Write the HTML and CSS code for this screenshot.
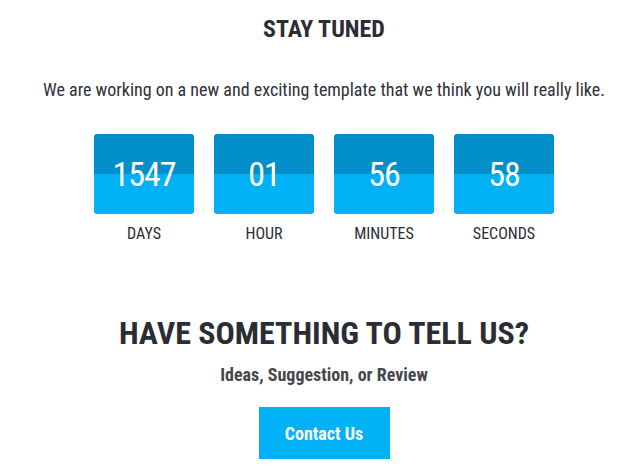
FILE: index.html
```html
<!DOCTYPE html>
<html>
<head>
<meta charset="utf-8">
<link rel="stylesheet" href="styles.css">
</head>
<body>
<main class="page">
  <h1 class="title">STAY TUNED</h1>
  <p class="lead">We are working on a new and exciting template that we think you will really like.</p>
  <div class="countdown">
    <div class="unit"><div class="box"><span class="num">1547</span></div><div class="label">DAYS</div></div>
    <div class="unit"><div class="box"><span class="num">01</span></div><div class="label">HOUR</div></div>
    <div class="unit"><div class="box"><span class="num">56</span></div><div class="label">MINUTES</div></div>
    <div class="unit"><div class="box"><span class="num">58</span></div><div class="label">SECONDS</div></div>
  </div>
  <h2 class="cta-title">HAVE SOMETHING TO TELL US?</h2>
  <p class="cta-sub">Ideas, Suggestion, or Review</p>
  <a class="btn" href="#">Contact Us</a>
</main>
</body>
</html>
```
FILE: styles.css
```css
html, body {
  margin: 0;
  padding: 0;
  background: #ffffff;
  overflow: hidden;
}
.page {
  font-family: "Roboto Condensed", "Liberation Sans Narrow", "DejaVu Sans Condensed", sans-serif;
  color: #2b2d34;
  display: flex;
  flex-direction: column;
  align-items: center;
  box-sizing: border-box;
  width: 631px;
  padding-left: 17px;
}
.title {
  margin: 13px 0 0;
  font-size: 24px;
  line-height: 32px;
  font-weight: 700;
}
.lead {
  margin: 34px 0 0;
  font-size: 18px;
  line-height: 22px;
  color: #2f3137;
}
.countdown {
  display: flex;
  gap: 20px;
  margin-top: 33px;
}
.unit {
  display: flex;
  flex-direction: column;
  align-items: center;
  width: 100px;
}
.box {
  width: 100px;
  height: 80px;
  border-radius: 3px;
  background: linear-gradient(#008fc9 0, #008fc9 50%, #00b1f5 50%, #00b1f5 100%);
  display: flex;
  align-items: center;
  justify-content: center;
}
.num {
  color: #ffffff;
  font-size: 34px;
  line-height: 40px;
  font-weight: 400;
  letter-spacing: -1px;
}
.label {
  margin-top: 10px;
  font-size: 16px;
  line-height: 20px;
  color: #2b2d34;
}
.cta-title {
  margin: 69px 0 0;
  font-size: 32px;
  line-height: 40px;
  font-weight: 700;
}
.cta-sub {
  margin: 11px 0 0;
  font-size: 18px;
  line-height: 22px;
  font-weight: 700;
  color: #45474d;
}
.btn {
  margin-top: 21px;
  width: 131px;
  height: 52px;
  display: flex;
  align-items: center;
  justify-content: center;
  background: #00b1f5;
  color: #ffffff;
  font-size: 18px;
  font-weight: 700;
  text-decoration: none;
}
```
